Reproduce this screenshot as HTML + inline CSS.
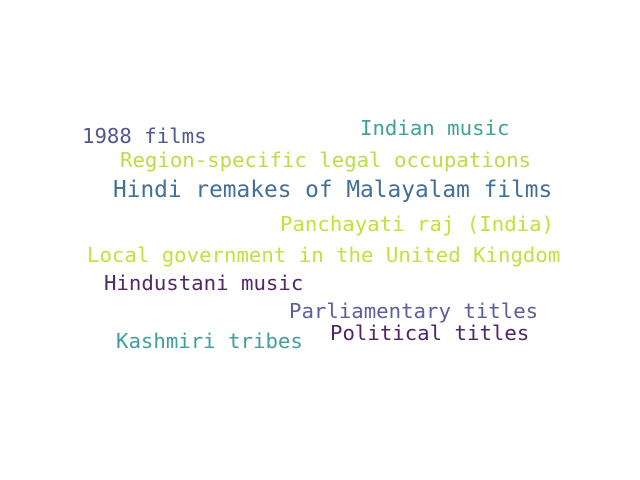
<!DOCTYPE html>
<html><head><meta charset="utf-8"><style>
html,body{margin:0;padding:0;background:#fff;width:640px;height:480px;overflow:hidden}
text{font-family:"DejaVu Sans Mono","Liberation Mono",monospace;font-size:20.7px}
</style></head><body>
<svg width="640" height="480" xmlns="http://www.w3.org/2000/svg">
<rect width="640" height="480" fill="#fff"/>
<text x="82" y="143" fill="#525792">1988 films</text>
<text x="360" y="135" fill="#3da393">Indian music</text>
<text x="120" y="167" fill="#bade46">Region-specific legal occupations</text>
<text x="113" y="197" fill="#437098" style="font-size:22.8px">Hindi remakes of Malayalam films</text>
<text x="280" y="231" fill="#c6e03a">Panchayati raj (India)</text>
<text x="87" y="262" fill="#c6e042">Local government in the United Kingdom</text>
<text x="104" y="290" fill="#52286a">Hindustani music</text>
<text x="289" y="318" fill="#5c5f9f">Parliamentary titles</text>
<text x="330" y="340" fill="#512566">Political titles</text>
<text x="116" y="348" fill="#439ea0">Kashmiri tribes</text>
</svg>
</body></html>
